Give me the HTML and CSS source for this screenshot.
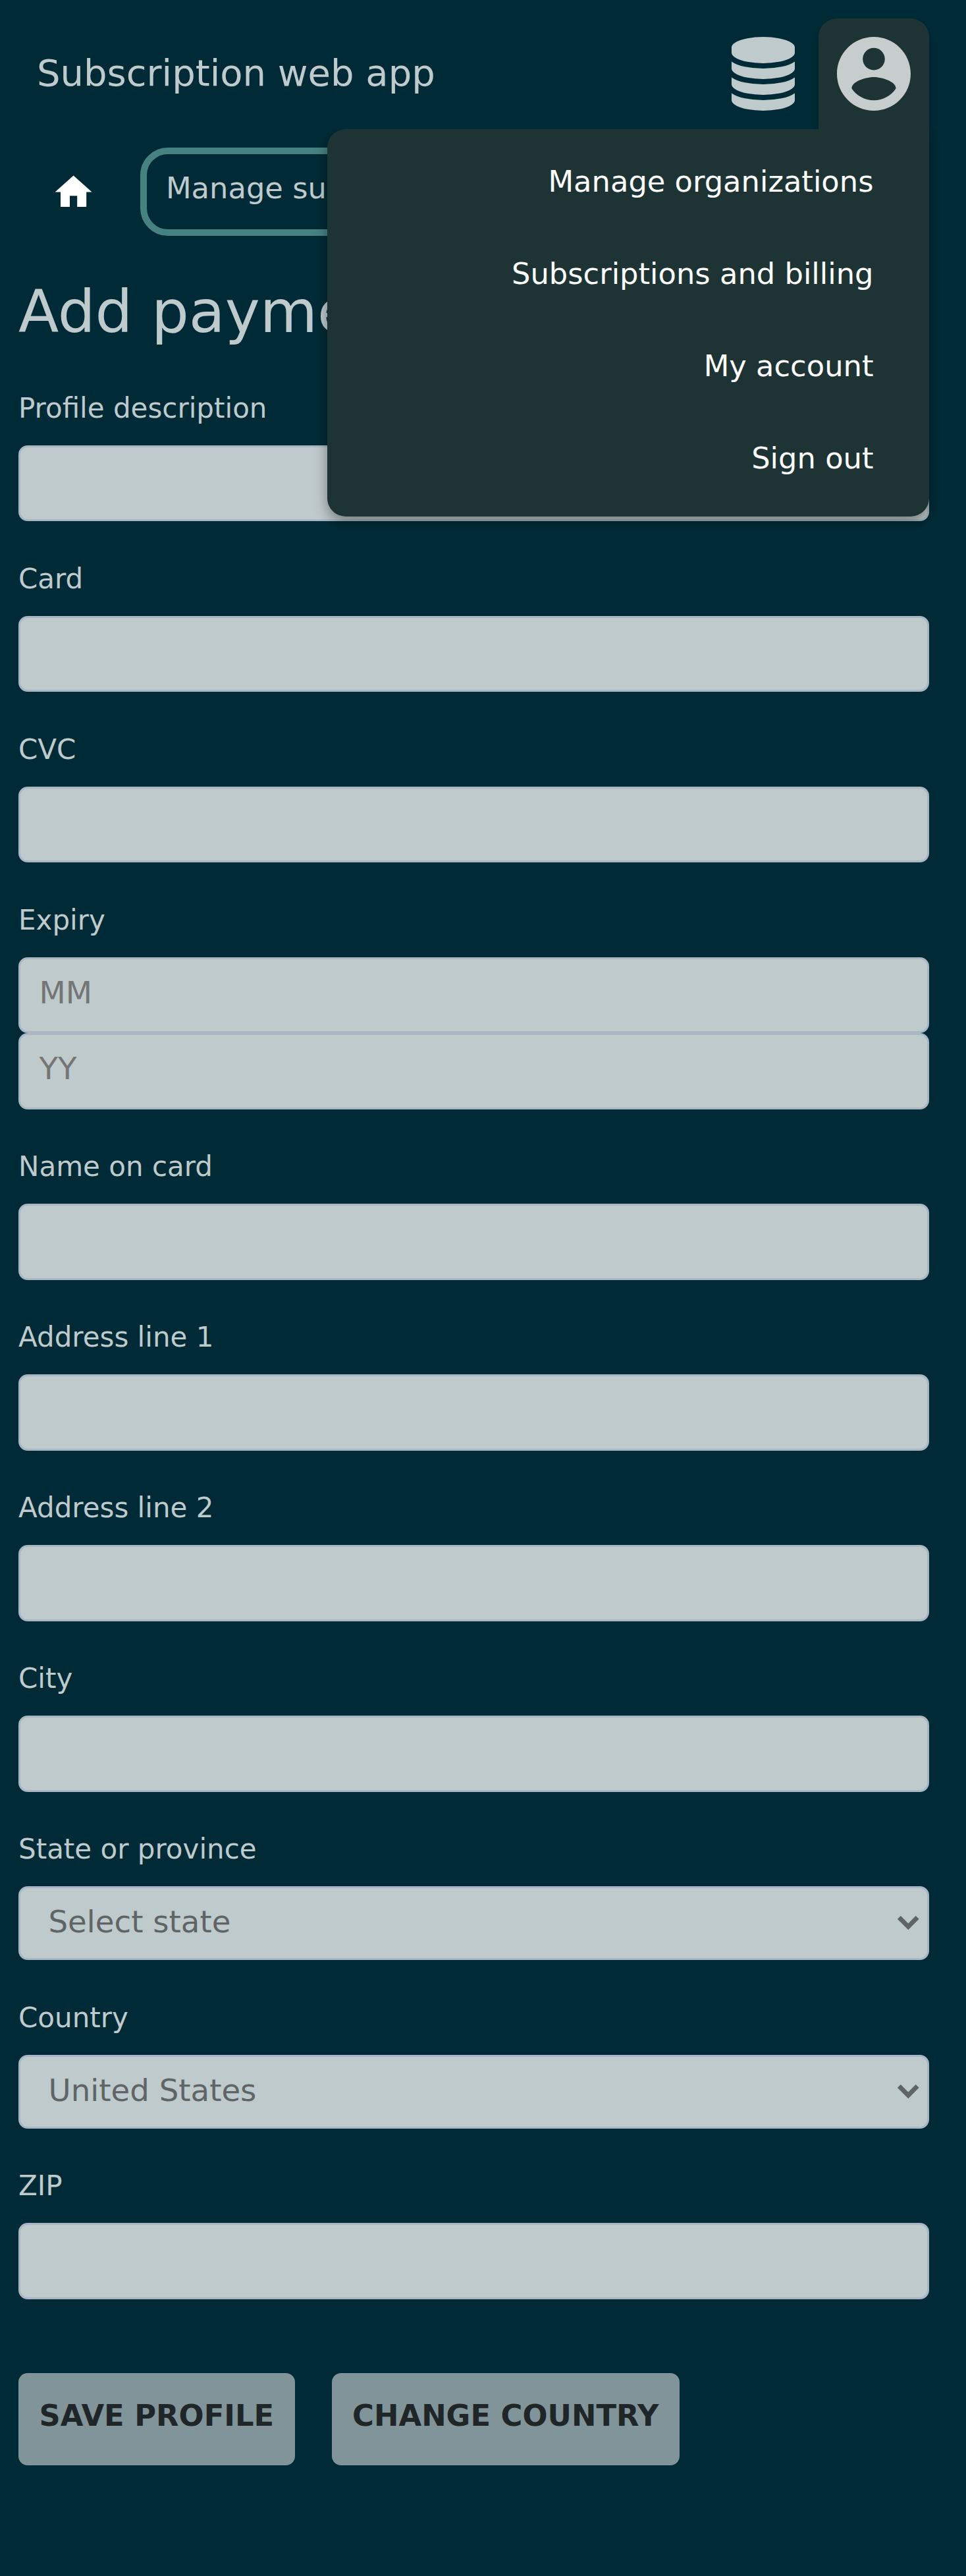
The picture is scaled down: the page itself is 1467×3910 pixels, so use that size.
FILE: index.html
```html
<!DOCTYPE html>
<html lang="en">
<head>
<meta charset="utf-8">
<title>Subscription web app</title>
<link rel="stylesheet" href="styles.css">
</head>
<body>
<header class="header">
  <div class="title">Subscription web app</div>
  <div class="tab">
    <svg class="icon" viewBox="-128 0 1792 1792"><path d="M768 768q237 0 443-43t325-127v170q0 69-103 128t-280 93.5-385 34.5-385-34.5-280-93.5-103-128v-170q119 84 325 127t443 43zm0 768q237 0 443-43t325-127v170q0 69-103 128t-280 93.5-385 34.5-385-34.5-280-93.5-103-128v-170q119 84 325 127t443 43zm0-384q237 0 443-43t325-127v170q0 69-103 128t-280 93.5-385 34.5-385-34.5-280-93.5-103-128v-170q119 84 325 127t443 43zm0-1152q208 0 385 34.5t280 93.5 103 128v128q0 69-103 128t-280 93.5-385 34.5-385-34.5-280-93.5-103-128v-128q0-69 103-128t280-93.5 385-34.5z"/></svg>
  </div>
  <div class="tab tab-open">
    <svg class="icon" viewBox="2 2 20 20"><path d="M12 2C6.48 2 2 6.48 2 12s4.48 10 10 10 10-4.48 10-10S17.52 2 12 2zm0 3c1.66 0 3 1.34 3 3s-1.34 3-3 3-3-1.34-3-3 1.34-3 3-3zm0 14.2c-2.5 0-4.71-1.28-6-3.22.03-1.99 4-3.08 6-3.08 1.99 0 5.97 1.09 6 3.08-1.29 1.94-3.5 3.22-6 3.22z"/></svg>
    <div class="menu">
      <a class="menu-item">Manage organizations</a>
      <a class="menu-item">Subscriptions and billing</a>
      <a class="menu-item">My account</a>
      <a class="menu-item">Sign out</a>
    </div>
  </div>
</header>
<nav class="nav">
  <a class="home"><svg class="home-icon" viewBox="0 0 24 24"><path d="M10 20v-6h4v6h5v-8h3L12 3 2 12h3v8z"/></svg></a>
  <a class="crumb">Manage subscriptions</a>
</nav>
<main class="main">
  <h1 class="heading">Add payment</h1>
  <form class="form">
    <div class="field"><label class="label">Profile description</label><input class="input"></div>
    <div class="field"><label class="label">Card</label><input class="input"></div>
    <div class="field"><label class="label">CVC</label><input class="input"></div>
    <div class="field"><label class="label">Expiry</label><input class="input" placeholder="MM"><input class="input" placeholder="YY"></div>
    <div class="field"><label class="label">Name on card</label><input class="input"></div>
    <div class="field"><label class="label">Address line 1</label><input class="input"></div>
    <div class="field"><label class="label">Address line 2</label><input class="input"></div>
    <div class="field"><label class="label">City</label><input class="input"></div>
    <div class="field"><label class="label">State or province</label>
      <div class="select"><span class="value">Select state</span><svg class="chevron" viewBox="0 0 32.6 21.4"><path d="M2.4 2.4 16.3 16.4 30.2 2.4"/></svg></div>
    </div>
    <div class="field"><label class="label">Country</label>
      <div class="select"><span class="value">United States</span><svg class="chevron" viewBox="0 0 32.6 21.4"><path d="M2.4 2.4 16.3 16.4 30.2 2.4"/></svg></div>
    </div>
    <div class="field"><label class="label">ZIP</label><input class="input"></div>
    <div class="actions">
      <button class="button" type="button">SAVE PROFILE</button>
      <button class="button" type="button">CHANGE COUNTRY</button>
    </div>
  </form>
</main>
</body>
</html>
```
FILE: styles.css
```css
* {
  box-sizing: border-box;
}

body {
  margin: 0;
  width: 1466.5px;
  min-height: 3910px;
  overflow-x: hidden;
  font-family: "DejaVu Sans", sans-serif;
  color: #bfcacd;
}

html {
  background: #002b36;
}

.header {
  display: flex;
  padding: 28px 56px 0 56px;
}

.title {
  flex: 1;
  font-size: 56px;
  line-height: 165px;
  white-space: nowrap;
}

.tab {
  width: 168px;
  height: 168px;
  padding: 28px;
}

.tab-open {
  position: relative;
  background: #1e3434;
  border-radius: 28px 28px 0 0;
  box-shadow: 0 7px 14px rgba(0, 0, 0, 0.25);
}

.icon {
  display: block;
  width: 112px;
  height: 112px;
  fill: #bfcacd;
}

.tab-open .icon {
  fill: #c7cccd;
}

.menu {
  position: absolute;
  z-index: 1;
  top: 168px;
  right: 0;
  width: 913.5px;
  height: 588px;
  padding: 10px 84px 0 0;
  background: #1e3434;
  border-radius: 28px 0 28px 28px;
  box-shadow: 0 8px 20px rgba(0, 0, 0, 0.38);
  clip-path: inset(0 -60px -60px -60px);
}

.menu-item {
  display: block;
  font-size: 44.8px;
  line-height: 140px;
  text-align: right;
  color: #fff;
}

.nav {
  display: flex;
  align-items: flex-start;
  padding: 28px 0 0 78.4px;
  gap: 67.4px;
}

.home {
  padding-top: 34px;
}

.home-icon {
  display: block;
  width: 67.2px;
  height: 67.2px;
  fill: #fff;
}

.crumb {
  height: 133.5px;
  padding: 0 28px 0 29px;
  border: 10px solid #478282;
  border-radius: 42px;
  font-size: 44.8px;
  line-height: 103px;
  white-space: nowrap;
}

.main {
  padding: 59.5px 56px 0 28px;
}

.heading {
  margin: 0 0 62.5px;
  font-size: 89.6px;
  font-weight: 400;
  line-height: 112px;
  white-space: nowrap;
}

.field {
  display: flex;
  flex-direction: column;
  margin-bottom: 59.5px;
}

.label {
  margin-bottom: 28px;
  font-size: 42px;
  line-height: 56px;
}

.input,
.select {
  width: 100%;
  border: 3px solid #a9b6c3;
  border-radius: 14px;
  background: #bfcacc;
  font: 46.67px "DejaVu Sans", sans-serif;
}

.input {
  height: 115.5px;
  padding: 0 28px 7px 28.5px;
  outline: 0;
}

.input::placeholder {
  color: #757575;
}

.select {
  display: flex;
  align-items: center;
  justify-content: space-between;
  height: 112px;
  padding: 0 12px 0 42.5px;
  color: #5f6566;
}

.value {
  padding-bottom: 4px;
}

.chevron {
  width: 32.6px;
  height: 21.4px;
  fill: none;
  stroke: #5f6566;
  stroke-width: 7;
}

.actions {
  display: flex;
  gap: 56px;
  padding-top: 52.5px;
}

.button {
  height: 140px;
  padding: 0 31.5px 10px;
  border: 0;
  border-radius: 14px;
  background: #80949a;
  color: #202628;
  font: 700 44.8px "DejaVu Sans", sans-serif;
  white-space: nowrap;
}
```
